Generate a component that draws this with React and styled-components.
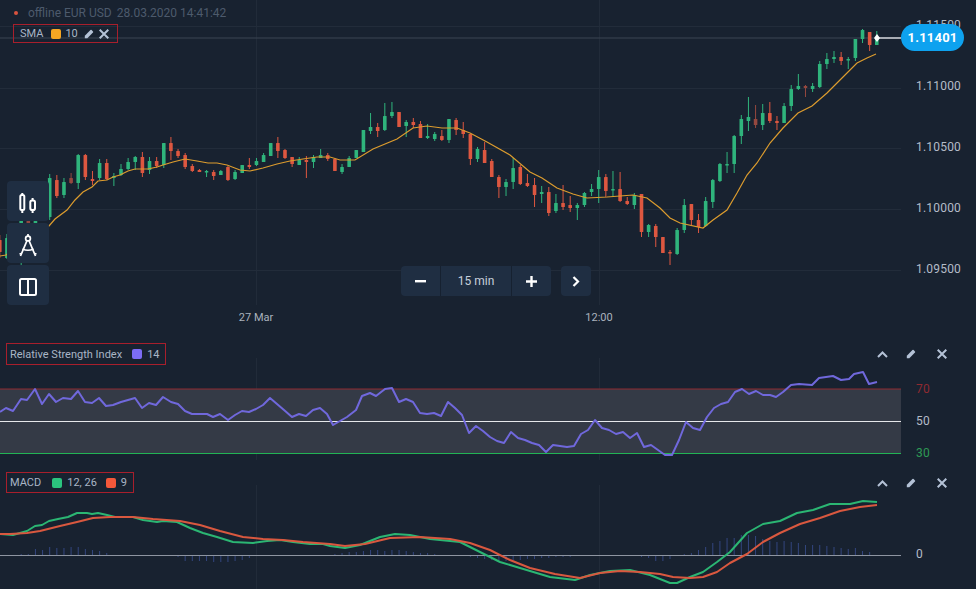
import React from "react";
import styled, { createGlobalStyle } from "styled-components";

const GlobalStyle = createGlobalStyle`
  html, body {
    margin: 0;
    padding: 0;
    height: 100%;
    overflow: hidden;
    background: #182230;
    font-family: Roboto, "Liberation Sans", sans-serif;
  }
`;

const CANDLE_COLORS = { g: "#2fb47c", r: "#dd5740", d: "#95483f" };
const GRID = "#222c3a";

// [type, wickTop, bodyTop, bodyBottom, wickBottom], first one sits at i = -7
const candles = [
  ["r", 235, 240, 252, 258], ["g", 234, 238, 258, 259], ["g", 228, 230, 238, 240], ["g", 215, 220, 258, 265],
  ["d", 217, 219, 226, 228], ["g", 219, 221, 230, 232], ["g", 200, 203, 214, 218],
  ["g", 174, 178, 217, 220], ["r", 175, 180, 196, 198], ["g", 178, 182, 195, 198], ["d", 173, 178, 183, 184],
  ["g", 154, 155, 183, 189], ["r", 154, 155, 177, 180], ["r", 171, 179, 181, 185], ["g", 159, 163, 178, 180],
  ["r", 159, 163, 179, 180], ["g", 173, 176, 178, 186], ["g", 164, 169, 175, 176], ["g", 158, 162, 169, 170],
  ["g", 156, 157, 162, 170], ["r", 152, 157, 173, 177], ["g", 157, 161, 170, 174], ["r", 157, 161, 166, 168],
  ["g", 143, 143, 165, 168], ["r", 137, 143, 151, 160], ["r", 149, 151, 156, 158], ["r", 153, 155, 167, 169],
  ["r", 164, 166, 171, 172], ["r", 169, 170, 172, 172], ["g", 170, 171, 172, 177], ["r", 170, 172, 176, 180],
  ["g", 170, 171, 175, 175], ["r", 166, 167, 180, 181], ["g", 170, 172, 179, 180], ["g", 165, 165, 173, 173],
  ["r", 158, 165, 167, 169], ["g", 158, 161, 165, 166], ["g", 153, 155, 162, 162], ["g", 143, 143, 156, 156],
  ["r", 137, 143, 151, 158], ["r", 149, 150, 158, 159], ["r", 157, 157, 164, 167], ["g", 157, 160, 165, 165],
  ["r", 156, 160, 162, 178], ["g", 155, 157, 162, 168], ["g", 149, 155, 158, 158], ["r", 153, 155, 159, 161],
  ["r", 159, 159, 171, 171], ["g", 164, 167, 172, 174], ["g", 156, 158, 167, 167], ["g", 150, 150, 158, 158],
  ["g", 130, 130, 152, 152], ["g", 113, 127, 131, 134], ["r", 123, 127, 131, 137], ["g", 103, 116, 130, 131],
  ["g", 102, 112, 116, 118], ["r", 112, 112, 127, 127], ["g", 120, 122, 126, 137], ["r", 118, 122, 125, 128],
  ["r", 121, 124, 138, 138], ["g", 124, 136, 138, 139], ["g", 132, 134, 139, 141], ["r", 130, 136, 140, 141],
  ["g", 119, 119, 140, 143], ["r", 118, 120, 130, 135], ["r", 122, 130, 134, 138], ["r", 134, 134, 159, 165],
  ["g", 147, 149, 159, 162], ["r", 142, 150, 163, 163], ["r", 159, 161, 177, 177], ["r", 175, 177, 187, 198],
  ["g", 179, 182, 187, 196], ["g", 158, 168, 182, 189], ["r", 165, 167, 184, 185], ["r", 174, 183, 186, 187],
  ["r", 178, 185, 195, 207], ["g", 186, 192, 194, 203], ["r", 187, 192, 213, 216], ["g", 194, 203, 211, 213],
  ["r", 185, 203, 207, 210], ["r", 196, 205, 208, 212], ["g", 203, 205, 208, 220], ["g", 192, 193, 205, 207],
  ["g", 184, 189, 192, 196], ["g", 170, 177, 189, 203], ["r", 174, 177, 191, 197], ["g", 171, 189, 190, 197],
  ["r", 172, 189, 201, 202], ["r", 197, 201, 204, 205], ["g", 193, 195, 205, 209], ["r", 194, 194, 232, 237],
  ["g", 224, 225, 232, 237], ["r", 224, 226, 237, 247], ["r", 237, 237, 253, 253], ["r", 250, 252, 253, 265],
  ["g", 228, 230, 254, 255], ["g", 199, 205, 230, 233], ["r", 204, 204, 220, 225], ["r", 214, 220, 227, 233],
  ["g", 197, 201, 226, 227], ["g", 179, 180, 202, 208], ["g", 163, 164, 181, 182], ["g", 152, 164, 165, 173],
  ["g", 135, 136, 164, 173], ["g", 115, 119, 136, 144], ["g", 97, 117, 121, 131], ["d", 105, 119, 125, 128],
  ["g", 104, 113, 125, 130], ["r", 102, 113, 121, 123], ["r", 116, 121, 123, 130], ["g", 103, 106, 123, 123],
  ["g", 85, 89, 106, 111], ["g", 74, 86, 89, 90], ["d", 85, 86, 88, 97], ["g", 83, 86, 89, 92],
  ["g", 61, 64, 87, 88], ["g", 53, 59, 64, 69], ["g", 51, 57, 59, 63], ["r", 52, 57, 61, 65],
  ["g", 57, 59, 60, 69], ["g", 39, 39, 58, 61], ["g", 29, 30, 39, 43], ["r", 32, 32, 45, 51],
  ["g", 31, 37, 45, 45],
];

const candleX = (i) => 49.7 + 7.13 * i;

const sma = "0,256 6,255 49,226 55,219 67,210 75,200 83,192 92,187 98,181 107,180 113,177 120,175 128,171 135,169 148,169 157,167 163,165 173,162 185,159 197,161 208,163 217,163 227,165 240,170 250,171 263,168 277,164 290,161 303,159 317,157 330,157 340,160 355,160 373,149 397,139 413,128 427,126 442,128 457,128 470,133 487,142 510,155 530,172 542,178 557,188 573,194 587,198 607,197 633,195 647,198 660,208 670,218 680,223 703,228 713,220 727,210 737,193 747,175 757,163 770,143 783,128 798,113 812,106 827,93 843,77 857,63 867,58 876,54";

const rsi = "0,412 6,408 13,411 21,399 27,400 35,389 42,404 49,394 56,402 63,398 71,399 78,391 85,402 92,403 99,398 106,406 113,405 121,402 128,400 135,398 142,408 149,403 156,405 163,397 171,402 178,404 185,411 192,414 199,414 207,414 213,417 220,414 228,420 235,415 242,411 249,412 256,409 263,405 270,398 277,404 284,410 292,417 299,414 306,416 313,410 320,408 327,414 333,425 340,421 347,417 356,410 362,396 370,393 376,396 385,389 392,388 399,402 406,399 413,402 420,413 427,414 434,413 441,416 448,402 455,408 462,415 469,433 476,426 483,431 490,437 497,441 504,443 511,432 518,438 525,440 532,443 539,445 546,452 553,445 560,446 567,447 574,446 581,434 588,430 595,420 602,428 609,430 616,434 623,432 630,438 637,433 644,447 651,445 658,450 665,455 672,455 679,440 686,422 693,428 700,430 707,417 714,408 721,404 728,402 735,392 742,389 749,394 756,391 763,395 770,395 776,397 783,392 791,385 799,384 812,385 819,378 833,376 841,380 849,379 854,374 863,372 869,384 877,382";

const macdFast = "0,534 13,535 27,531 35,526 42,525 49,521 58,519 68,517 77,513 87,513 92,514 98,513 107,515 115,517 133,517 143,520 157,522 163,521 177,522 190,528 203,533 217,537 233,542 253,543 267,541 280,540 293,542 310,544 323,544 330,546 345,548 360,545 380,537 395,534 410,535 430,539 460,542 480,552 500,562 520,568 550,577 575,580 590,575 610,571 630,570 650,575 660,579 670,583 677,583 690,577 703,572 717,562 730,552 747,533 763,524 780,521 797,513 813,510 830,504 850,504 863,501 877,502";

const macdSlow = "0,534 10,534 27,533 40,531 60,526 77,522 93,518 110,517 133,517 153,519 180,521 200,525 220,531 243,537 263,539 283,540 303,542 330,544 345,546 365,544 390,538 420,537 450,539 470,543 490,550 510,560 530,568 555,574 580,578 600,573 620,571 640,572 660,574 673,577 690,578 703,577 717,572 730,563 747,554 763,542 780,533 800,524 820,518 840,511 860,507 877,505";

// histogram heights, first one sits at i = -4
const histogram = [
  1, 1, 6, 5, 8, 7, 7, 8, 8, 6, 5, 4, 2, 0, 0, 0, 0, -1, -1, -1, -1, -1, -2,
  -6, -6, -6, -6, -7, -7, -7, -6, -5, -3, -1, -1, 0, -1, 0, -1, -1, 0, 0, 0, 0,
  1, 2, 3, 3, 4, 5, 5, 4, 5, 5, 4, 3, 2, 2, 1, 0, 0, -1, -1,
  -2, -3, -4, -5, -5, -6, -5, -5, -4, -4, -3, -3, -2, -2, -2, -1, -1, -1, -1, -1, -1, -1, -1, -1, -2, -3,
  -6, -6, -4, 0, 1, 2, 5, 8, 12, 14, 17, 17, 20, 20, 19, 16, 14, 13, 14, 13, 12, 10, 10, 10, 9, 8, 7, 6, 7, 4, 3,
];

const Page = styled.div`
  width: 976px;
  height: 589px;
  display: flex;
  flex-direction: column;
  background: #182230;
  overflow: hidden;
`;

const Pane = styled.section`
  position: relative;
  display: flex;
  height: ${(p) => p.$height}px;
`;

const Chart = styled.svg`
  display: block;
  flex: none;
  width: 901px;
  height: 100%;
`;

const Axis = styled.div`
  flex: 1;
  display: flex;
  flex-direction: column;
  gap: ${(p) => p.$gap}px;
  padding: ${(p) => p.$top}px 0 0 15px;
`;

const AxisLabel = styled.span`
  height: 14px;
  line-height: 14px;
  font-size: 12px;
  letter-spacing: 0.2px;
  color: ${(p) => p.$color || "#b4bcc8"};
`;

const Status = styled.div`
  position: absolute;
  left: 14px;
  top: 5px;
  display: flex;
  align-items: center;
  height: 16px;
  font-size: 12px;
  color: #4d5a6c;
`;

const Dot = styled.i`
  width: 4px;
  height: 4px;
  margin-right: 10px;
  border-radius: 50%;
  background: #d9533f;
`;

const Stamp = styled.span`
  margin-left: 5px;
`;

const Legend = styled.div`
  position: absolute;
  left: ${(p) => p.$left}px;
  top: ${(p) => p.$top}px;
  box-sizing: border-box;
  height: ${(p) => p.$height}px;
  display: flex;
  align-items: center;
  gap: ${(p) => p.$gap || 5}px;
  padding: 0 ${(p) => p.$padRight}px 0 ${(p) => p.$padLeft}px;
  border: 1px solid #a81f2c;
  font-size: 11px;
  color: #a9b5c6;
`;

const Swatch = styled.i`
  width: 10px;
  height: 10px;
  margin-left: ${(p) => p.$gap || 0}px;
  border-radius: 2px;
  background: ${(p) => p.$color};
`;

const LegendIcon = styled.svg`
  display: block;
  margin-left: ${(p) => p.$gap || 0}px;
  color: #b4c2d6;
`;

const PaneTools = styled.div`
  position: absolute;
  top: ${(p) => p.$top}px;
  left: 876px;
  display: flex;
  align-items: center;
  gap: 17px;
  color: #a5b3c7;
`;

const ToolSlot = styled.div`
  width: 12px;
  display: flex;
  justify-content: center;

  &:last-child {
    margin-left: 2px;
  }
`;

const SideBar = styled.div`
  position: absolute;
  left: 7px;
  top: 181px;
  display: flex;
  flex-direction: column;
  gap: 2px;
`;

const SideButton = styled.button`
  box-sizing: border-box;
  width: 42px;
  height: 40px;
  padding: 4px 0 0;
  display: flex;
  align-items: center;
  justify-content: center;
  border: none;
  border-radius: 4px;
  background: #1f2e42;
  color: #fff;
`;

const TimeControls = styled.div`
  position: absolute;
  left: 401px;
  top: 266px;
  display: flex;
  gap: 10px;
`;

const Stepper = styled.div`
  display: flex;
  height: 30px;
  border-radius: 4px;
  overflow: hidden;
  background: #1f2e42;
`;

const StepButton = styled.button`
  width: ${(p) => p.$width}px;
  height: 30px;
  padding: 0;
  display: flex;
  align-items: center;
  justify-content: center;
  background: transparent;
  border: none;
  border-left: ${(p) => (p.$divided ? "1px solid #162130" : "none")};
  color: #fff;
`;

const Period = styled.div`
  width: 70px;
  display: flex;
  align-items: center;
  justify-content: center;
  border-left: 1px solid #162130;
  font-size: 12px;
  color: #c7d0db;
`;

const NextButton = styled(StepButton)`
  border-radius: 4px;
  background: #1f2e42;
`;

const TimeLabel = styled.span`
  position: absolute;
  top: 311px;
  left: ${(p) => p.$x}px;
  transform: translateX(-50%);
  font-size: 11px;
  line-height: 14px;
  color: #aab2bd;
`;

const PriceTag = styled.div`
  position: absolute;
  left: 901px;
  top: 24px;
  width: 63px;
  height: 27px;
  display: flex;
  align-items: center;
  justify-content: center;
  border-radius: 14px;
  background: #0ea2ef;
  font-size: 13px;
  font-weight: 700;
  letter-spacing: 0.2px;
  color: #fff;
`;

const Pencil = ({ gap }) => (
  <LegendIcon $gap={gap} width="10" height="10" viewBox="0 0 24 24" fill="currentColor">
    <path d="M2 22v-6L15.500 2.500a2 2 0 0 1 2.800 0l3.200 3.200a2 2 0 0 1 0 2.800L8 22z" />
  </LegendIcon>
);

const Cross = ({ gap }) => (
  <LegendIcon $gap={gap} width="10" height="10" viewBox="0 0 10 10" stroke="currentColor" strokeWidth="2">
    <path d="M.7.700l8.600 8.600M9.300.700L.7 9.300" />
  </LegendIcon>
);

const Caret = () => (
  <LegendIcon width="11" height="7" viewBox="0 0 11 7" fill="none" stroke="currentColor" strokeWidth="2">
    <path d="M1 6l4.500-4.500L10 6" />
  </LegendIcon>
);

const Tools = ({ top }) => (
  <PaneTools $top={top}>
    <ToolSlot><Caret /></ToolSlot>
    <ToolSlot><Pencil /></ToolSlot>
    <ToolSlot><Cross /></ToolSlot>
  </PaneTools>
);

const CandleIcon = () => (
  <svg width="20" height="24" viewBox="0 0 20 24" fill="none" stroke="currentColor" strokeWidth="2">
    <rect x="2.300" y="4" width="4" height="15" rx="1.500" />
    <path d="M4.300 2v2M4.300 19v3" />
    <rect x="12.300" y="9.500" width="4.700" height="9.500" rx="1.800" />
    <path d="M14.600 7v2.500M14.600 19v3" />
  </svg>
);

const DividerIcon = () => (
  <svg width="20" height="26" viewBox="0 0 20 26" fill="none" stroke="currentColor" strokeWidth="1.700">
    <circle cx="10" cy="6.500" r="2.400" />
    <path d="M10 2v2M8.900 8.800L2.500 24M11.100 8.800L17.500 24" />
    <path d="M1.500 22l1.800-.500M18.500 22l-1.800-.500" />
    <path d="M4.500 17q5.500 2.500 11 0" />
  </svg>
);

const PanelsIcon = () => (
  <svg width="20" height="20" viewBox="0 0 20 20" fill="none" stroke="currentColor" strokeWidth="2">
    <rect x="2" y="2" width="16" height="16" rx="1.500" />
    <path d="M10 2v16" />
  </svg>
);

const VerticalGrid = ({ from, to }) => (
  <path d={`M256.500 ${from}V${to}M599.500 ${from}V${to}`} stroke="#212b39" />
);

const App = () => (
  <Page>
    <GlobalStyle />

    <Pane $height={335}>
      <Chart viewBox="0 0 901 335">
        <VerticalGrid from={0} to={305} />
        {[26, 88, 148, 209, 270].map((y) => (
          <line key={y} x1="0" x2="901" y1={y + 0.5} y2={y + 0.5} stroke={GRID} />
        ))}
        <line x1="0" x2="877" y1="38" y2="38" stroke="#3a4452" strokeWidth="1.200" />
        {candles.map(([type, wickTop, top, bottom, wickBottom], n) => {
          const x = candleX(n - 7);
          return (
            <g key={n} fill={CANDLE_COLORS[type]}>
              <rect x={x - 0.5} y={wickTop} width="1" height={wickBottom - wickTop} />
              <rect x={x - 1.8} y={top} width="3.600" height={Math.max(bottom - top, 1.5)} rx="0.500" />
            </g>
          );
        })}
        <polyline points={sma} fill="none" stroke="#dc9c2e" strokeWidth="1.200" />
        <line x1="877" x2="901" y1="38" y2="38" stroke="#d8dbe0" strokeWidth="1.500" />
        <path d="M877 34l3 4-3 4-3-4z" fill="#fff" />
      </Chart>
      <Axis $top={18} $gap={47}>
        <AxisLabel>1.11500</AxisLabel>
        <AxisLabel>1.11000</AxisLabel>
        <AxisLabel>1.10500</AxisLabel>
        <AxisLabel>1.10000</AxisLabel>
        <AxisLabel>1.09500</AxisLabel>
      </Axis>

      <Status>
        <Dot />
        offline EUR USD
        <Stamp>28.03.2020 14:41:42</Stamp>
      </Status>

      <Legend $left={13} $top={24} $height={19} $padLeft={6} $padRight={8} $gap={4}>
        SMA
        <Swatch $color="#f5a623" $gap={4} />
        10
        <Pencil gap={2} />
        <Cross gap={1} />
      </Legend>

      <PriceTag>1.11401</PriceTag>

      <SideBar>
        <SideButton><CandleIcon /></SideButton>
        <SideButton><DividerIcon /></SideButton>
        <SideButton><PanelsIcon /></SideButton>
      </SideBar>

      <TimeControls>
        <Stepper>
          <StepButton $width={39}>
            <svg width="11" height="3" viewBox="0 0 11 3" fill="currentColor"><rect width="11" height="2.400" /></svg>
          </StepButton>
          <Period>15 min</Period>
          <StepButton $width={40} $divided>
            <svg width="11" height="11" viewBox="0 0 11 11" fill="currentColor"><path d="M4.300 0h2.400v4.300H11v2.400H6.700V11H4.300V6.700H0V4.300h4.300z" /></svg>
          </StepButton>
        </Stepper>
        <NextButton $width={30}>
          <svg width="8" height="11" viewBox="0 0 8 11" fill="none" stroke="currentColor" strokeWidth="2.200"><path d="M1.500 1l4.500 4.500L1.500 10" /></svg>
        </NextButton>
      </TimeControls>

      <TimeLabel $x={256}>27 Mar</TimeLabel>
      <TimeLabel $x={599}>12:00</TimeLabel>
    </Pane>

    <Pane $height={130}>
      <Chart viewBox="0 335 901 130">
        <VerticalGrid from={358} to={460} />
        <rect x="0" y="389" width="901" height="65" fill="#343a46" />
        <line x1="0" x2="901" y1="389" y2="389" stroke="#8f2a30" />
        <line x1="0" x2="901" y1="421.500" y2="421.500" stroke="#e6e8eb" />
        <line x1="0" x2="901" y1="453.500" y2="453.500" stroke="#22b455" strokeWidth="1.200" />
        <polyline points={rsi} fill="none" stroke="#7068dc" strokeWidth="2" strokeLinejoin="round" />
      </Chart>
      <Axis $top={47} $gap={18}>
        <AxisLabel $color="#8f2a30">70</AxisLabel>
        <AxisLabel>50</AxisLabel>
        <AxisLabel $color="#2e9a55">30</AxisLabel>
      </Axis>

      <Legend $left={6} $top={8} $height={22} $padLeft={3} $padRight={5}>
        Relative Strength Index
        <Swatch $color="#7c6cf5" $gap={5} />
        14
      </Legend>
      <Tools top={14} />
    </Pane>

    <Pane $height={124}>
      <Chart viewBox="0 465 901 124">
        <VerticalGrid from={485} to={589} />
        {histogram.map((h, n) => {
          const x = candleX(n - 4);
          return h === 0 ? null : (
            <line key={n} x1={x} x2={x} y1={555} y2={555 - h} stroke="#33467f" />
          );
        })}
        <line x1="0" x2="901" y1="555.500" y2="555.500" stroke="#8e95a1" />
        <polyline points={macdFast} fill="none" stroke="#2bb673" strokeWidth="2" strokeLinejoin="round" />
        <polyline points={macdSlow} fill="none" stroke="#d9583f" strokeWidth="2" strokeLinejoin="round" />
      </Chart>
      <Axis $top={82} $gap={0}>
        <AxisLabel>0</AxisLabel>
      </Axis>

      <Legend $left={6} $top={7} $height={21} $padLeft={3} $padRight={6}>
        MACD
        <Swatch $color="#2bc47e" $gap={6} />
        12, 26
        <Swatch $color="#f4583a" $gap={4} />
        9
      </Legend>
      <Tools top={13} />
    </Pane>
  </Page>
);

export default App;
